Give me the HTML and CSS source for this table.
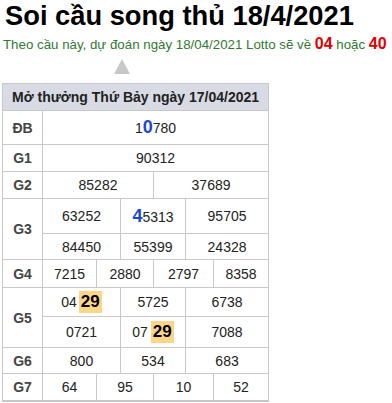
FILE: index.html
```html
<!DOCTYPE html>
<html lang="vi">
<head>
<meta charset="utf-8">
<title>Soi cầu song thủ 18/4/2021</title>
<link rel="stylesheet" href="styles.css">
</head>
<body>
<h1 class="title">Soi cầu song thủ 18/4/2021</h1>
<p class="lead">Theo cầu này, dự đoán ngày 18/04/2021 Lotto sẽ về <b class="pick">04</b> hoặc <b class="pick">40</b></p>
<div class="arrow"></div>
<table class="kq">
  <colgroup>
    <col class="c0"><col class="c1"><col class="c2"><col class="c3"><col class="c4"><col class="c5"><col class="c6">
  </colgroup>
  <thead>
    <tr class="h-head"><th colspan="7">Mở thưởng Thứ Bảy ngày 17/04/2021</th></tr>
  </thead>
  <tbody>
    <tr class="h-db"><td class="lbl">ĐB</td><td colspan="6">1<b class="blue">0</b>780</td></tr>
    <tr class="h-27"><td class="lbl">G1</td><td colspan="6">90312</td></tr>
    <tr class="h-27"><td class="lbl">G2</td><td colspan="3">85282</td><td colspan="3">37689</td></tr>
    <tr class="h-g3a"><td class="lbl" rowspan="2">G3</td><td colspan="2">63252</td><td colspan="2"><b class="blue">4</b>5313</td><td colspan="2">95705</td></tr>
    <tr class="h-g3b"><td colspan="2">84450</td><td colspan="2">55399</td><td colspan="2">24328</td></tr>
    <tr class="h-g4"><td class="lbl">G4</td><td>7215</td><td colspan="2">2880</td><td colspan="2">2797</td><td>8358</td></tr>
    <tr class="h-g5a"><td class="lbl" rowspan="2">G5</td><td colspan="2">04<b class="hit">29</b></td><td colspan="2">5725</td><td colspan="2">6738</td></tr>
    <tr class="h-g5b"><td colspan="2">0721</td><td colspan="2">07<b class="hit hit-sp">29</b></td><td colspan="2">7088</td></tr>
    <tr class="h-g6"><td class="lbl">G6</td><td colspan="2">800</td><td colspan="2">534</td><td colspan="2">683</td></tr>
    <tr class="h-27 last"><td class="lbl">G7</td><td>64</td><td colspan="2">95</td><td colspan="2">10</td><td>52</td></tr>
  </tbody>
</table>
</body>
</html>
```
FILE: styles.css
```css
html, body {
  margin: 0;
  padding: 0;
  background: #fff;
  font-family: "Liberation Sans", Arial, sans-serif;
  color: #222;
}

.title {
  margin: 0 0 0 5px;
  font-size: 27.3px;
  line-height: 32px;
  font-weight: bold;
  color: #000;
}

.lead {
  margin: 2.5px 0 0 3px;
  font-size: 13.3px;
  line-height: 18px;
  color: #2f7a2f;
  white-space: nowrap;
}

.pick {
  color: #e00000;
  font-size: 16px;
  font-weight: bold;
}

.arrow {
  width: 0;
  height: 0;
  margin: 5.5px 0 0 114px;
  border-left: 8px solid transparent;
  border-right: 8px solid transparent;
  border-bottom: 15px solid #c8c8c8;
}

.kq {
  margin: 9px 0 0 2px;
  border-collapse: collapse;
  table-layout: fixed;
  width: 267px;
  font-size: 14px;
}

.c0 { width: 40px; }
.c1 { width: 54px; }
.c2 { width: 24px; }
.c3 { width: 33px; }
.c4 { width: 32px; }
.c5 { width: 28px; }
.c6 { width: 55px; }

.kq th,
.kq td {
  border: 1px solid #c8c8c8;
  padding: 0;
  text-align: center;
  vertical-align: middle;
  white-space: nowrap;
}

.kq th {
  background: #d8dbe4;
  font-size: 14px;
  font-weight: bold;
  color: #222;
  height: 26px;
}

.kq .lbl {
  font-weight: bold;
  color: #444;
}

.h-db td { height: 33px; }
.h-27 td { height: 26px; }
.h-g3a td { height: 34px; }
.h-g3b td { height: 25px; }
.h-g4 td { height: 27px; }
.h-g5a td { height: 28px; }
.h-g5b td { height: 30px; }
.h-g6 td { height: 25px; }

.last td { border-bottom: 2px solid #c8c8c8; }

.blue {
  color: #1848d8;
  font-size: 18px;
  font-weight: bold;
}

.hit {
  display: inline-block;
  margin-left: 2px;
  padding: 0 2px;
  line-height: 22px;
  background: #fcd688;
  color: #000;
  font-size: 17px;
  font-weight: bold;
}

.hit-sp { margin-left: 3px; }
```
